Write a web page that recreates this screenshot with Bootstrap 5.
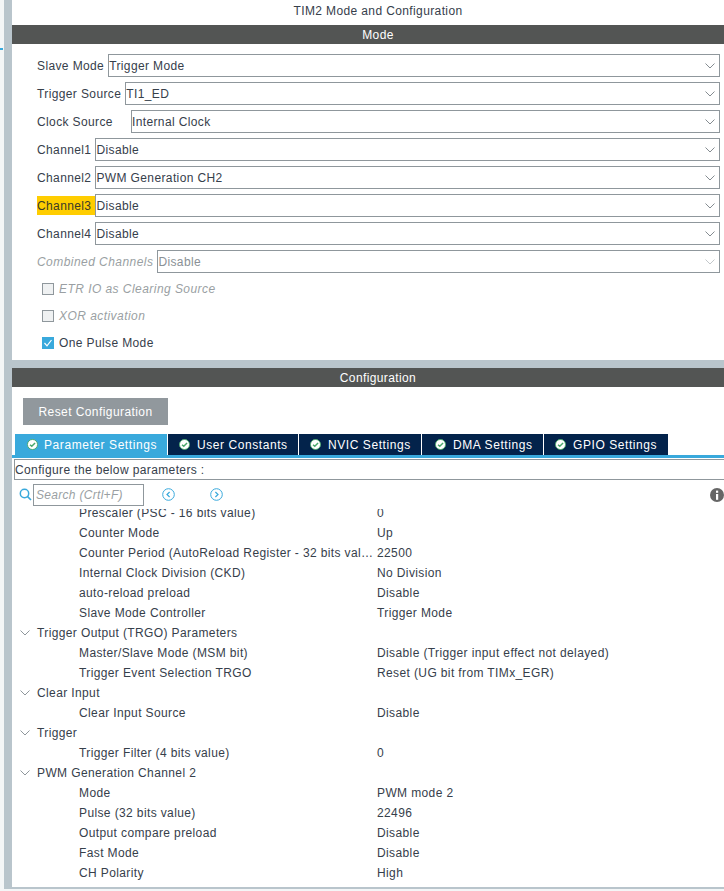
<!DOCTYPE html>
<html lang="en">
<head>
<meta charset="utf-8">
<title>TIM2 Mode and Configuration</title>
<link href="https://cdn.jsdelivr.net/npm/bootstrap@5.3.0/dist/css/bootstrap.min.css" rel="stylesheet">
<style>
html,body{height:891px;overflow:hidden}
body{font-family:"Liberation Sans",Arial,sans-serif;font-size:12px;letter-spacing:.38px;color:#36404b;background:#f4f6f7}
.shell{height:889px;padding-left:4px}
.gutter{width:8px;background:#b9c5cc;flex:none}
.edge-mark{position:absolute;left:0;top:48px;width:3px;height:2px;background:#39a9dc}
.main{flex:1;min-width:0;background:#b9c5cc}
.mode-title{height:25px;line-height:22px;background:#fff;text-align:center;padding-left:20px}
.bar{height:19px;line-height:20px;background:#535554;color:#fff;text-align:center;padding-left:20px}
.mode-pane{background:#fff;height:316px;padding:10px 4px 0 25px;margin-bottom:8px}
.f-row{height:23px;margin-bottom:5px;line-height:24px;white-space:nowrap}
.f-label{flex:none}
.f-label.mark-y{background:#ffcd00;color:#3a3a2a;height:19px;line-height:20px;align-self:center}
.f-label.wide-gap{margin-right:18px}
.f-pick.form-select{flex:1;min-width:0;height:23px;padding:1px 22px 0 0;border:1px solid #8f979c;border-radius:0;font-size:12px;letter-spacing:.38px;line-height:21px;color:#36404b;background-image:url("data:image/svg+xml,%3Csvg xmlns='http://www.w3.org/2000/svg' viewBox='0 0 10 6'%3E%3Cpath d='M.5.5 5 5 9.500.5' fill='none' stroke='%23858c91'/%3E%3C/svg%3E");background-size:10px 6px;background-position:right 4px center;box-shadow:none}
.f-pick.form-select:disabled{background-color:#fff;color:#8a9196;border-color:#8f979c;background-image:url("data:image/svg+xml,%3Csvg xmlns='http://www.w3.org/2000/svg' viewBox='0 0 10 6'%3E%3Cpath d='M.5.5 5 5 9.500.5' fill='none' stroke='%23c3c8cb'/%3E%3C/svg%3E")}
.dim{color:#9a9fa3;font-style:italic;letter-spacing:.45px}
.chks{margin-top:-3px}
.chk{height:27px;margin:0 0 0 5px;padding:0;min-height:0;gap:5px}
.chk .form-check-input{float:none;margin:0;width:12px;height:12px;border-radius:0;border:1px solid #8f979c;background-color:#eff1f2;opacity:1}
.chk .form-check-input:checked{background-color:#39a9dc;border-color:#39a9dc;background-size:12px 12px;background-image:url("data:image/svg+xml,%3Csvg xmlns='http://www.w3.org/2000/svg' viewBox='0 0 12 12'%3E%3Cpath d='M2.500 6 5 8.800 9.500 3' fill='none' stroke='%23fff' stroke-width='1.200'/%3E%3C/svg%3E")}
.conf-pane{background:#fff;height:500px;overflow:hidden}
.reset.btn{display:block;margin:11px 0 9px 11px;height:27px;width:145px;padding:0;border:0;border-radius:0;background:#91989d;color:#fff;font-size:12px;letter-spacing:.42px}
.tabbar.nav{flex-wrap:nowrap;margin:0;border-bottom:3px solid #39a9dc;padding-left:3px;height:24px}
.tabbar .nav-link{height:21px;line-height:21px;padding:0 0 0 11px;border:0;border-radius:0;background:#03234b;color:#fff;font-size:12px;letter-spacing:.57px;margin-right:1px;display:flex;align-items:center;justify-content:flex-start;gap:6px}
.tabbar .nav-link.active{background:#39a9dc;color:#fff;padding-left:12px}
.tab-text{padding-top:1px}
.t1{width:152px}.t2{width:130px}.t3{width:122px}.t4{width:121px}.t5{width:124px}
.tabbar .nav-link.t2,.tabbar .nav-link.t3,.tabbar .nav-link.t5{gap:7px}
.tabbar .nav-link.t4{padding-left:13px;gap:7px}
.ok{width:11px;height:11px;flex:none}
.cfg-line{height:21px;line-height:20px;margin:1px 0 0 2px;border:1px solid #8f979c;border-right:0;padding-left:0;white-space:nowrap}
.find-row{height:29px;padding:4px 0 0 7px;gap:1px;background:#fff;position:relative;z-index:1}
.find.form-control{width:111px;height:22px;min-height:0;padding:0 2px;border:1px solid #8f979c;border-radius:0;font-size:12px;font-style:italic;letter-spacing:.3px;box-shadow:none}
.find.form-control::placeholder{color:#9a9fa3;opacity:1}
.nav-next{margin-left:34px}
.nav-prev{margin-left:17px}
.tree{height:390px;margin-top:-6px}
.t-row{height:20px;line-height:20px;white-space:nowrap;display:flex}
.t-row.leaf{padding-left:67px}
.t-row.grp{padding-left:8px;gap:7px;align-items:center}
.t-key{width:298px;flex:none}
.t-key.cut{width:296px;margin-right:2px}
.t-row.grp svg{width:10px;height:6px;flex:none}
</style>
</head>
<body>
<span class="edge-mark"></span>
<div class="shell d-flex">
  <div class="gutter"></div>
  <div class="main">
    <div class="mode-title">TIM2 Mode and Configuration</div>
    <div class="bar">Mode</div>
    <div class="mode-pane">
      <div class="f-row d-flex gap-1"><span class="f-label">Slave Mode</span><select class="f-pick form-select"><option>Trigger Mode</option></select></div>
      <div class="f-row d-flex gap-1"><span class="f-label">Trigger Source</span><select class="f-pick form-select"><option>TI1_ED</option></select></div>
      <div class="f-row d-flex"><span class="f-label wide-gap">Clock Source</span><select class="f-pick form-select"><option>Internal Clock</option></select></div>
      <div class="f-row d-flex"><span class="f-label pe-1">Channel1</span><select class="f-pick form-select"><option>Disable</option></select></div>
      <div class="f-row d-flex"><span class="f-label pe-1">Channel2</span><select class="f-pick form-select"><option>PWM Generation CH2</option></select></div>
      <div class="f-row d-flex"><span class="f-label mark-y pe-1">Channel3</span><select class="f-pick form-select"><option>Disable</option></select></div>
      <div class="f-row d-flex"><span class="f-label pe-1">Channel4</span><select class="f-pick form-select"><option>Disable</option></select></div>
      <div class="f-row d-flex gap-1"><span class="f-label dim">Combined Channels</span><select class="f-pick form-select" disabled><option>Disable</option></select></div>
      <div class="chks">
      <div class="chk form-check d-flex align-items-center"><input class="form-check-input" type="checkbox" disabled id="c1"><label class="dim" for="c1">ETR IO as Clearing Source</label></div>
      <div class="chk form-check d-flex align-items-center"><input class="form-check-input" type="checkbox" disabled id="c2"><label class="dim" for="c2">XOR activation</label></div>
      <div class="chk form-check d-flex align-items-center"><input class="form-check-input" type="checkbox" checked id="c3"><label for="c3">One Pulse Mode</label></div>
      </div>
    </div>
    <div class="bar">Configuration</div>
    <div class="conf-pane">
      <button class="reset btn" type="button">Reset Configuration</button>
      <ul class="tabbar nav">
        <li class="nav-item"><a class="nav-link active t1" href="#"><svg class="ok" viewBox="0 0 12 12"><circle cx="6" cy="6" r="5.5" fill="#fff" stroke="#49a86b"/><path d="M3.3 6.200 5.200 8 8.800 4.300" fill="none" stroke="#49a86b" stroke-width="1.6"/></svg><span class="tab-text">Parameter Settings</span></a></li>
        <li class="nav-item"><a class="nav-link t2" href="#"><svg class="ok" viewBox="0 0 12 12"><circle cx="6" cy="6" r="5.5" fill="#fff" stroke="#49a86b"/><path d="M3.3 6.200 5.200 8 8.800 4.300" fill="none" stroke="#49a86b" stroke-width="1.6"/></svg><span class="tab-text">User Constants</span></a></li>
        <li class="nav-item"><a class="nav-link t3" href="#"><svg class="ok" viewBox="0 0 12 12"><circle cx="6" cy="6" r="5.5" fill="#fff" stroke="#49a86b"/><path d="M3.3 6.200 5.200 8 8.800 4.300" fill="none" stroke="#49a86b" stroke-width="1.6"/></svg><span class="tab-text">NVIC Settings</span></a></li>
        <li class="nav-item"><a class="nav-link t4" href="#"><svg class="ok" viewBox="0 0 12 12"><circle cx="6" cy="6" r="5.5" fill="#fff" stroke="#49a86b"/><path d="M3.3 6.200 5.200 8 8.800 4.300" fill="none" stroke="#49a86b" stroke-width="1.6"/></svg><span class="tab-text">DMA Settings</span></a></li>
        <li class="nav-item"><a class="nav-link t5" href="#"><svg class="ok" viewBox="0 0 12 12"><circle cx="6" cy="6" r="5.5" fill="#fff" stroke="#49a86b"/><path d="M3.3 6.200 5.200 8 8.800 4.300" fill="none" stroke="#49a86b" stroke-width="1.6"/></svg><span class="tab-text">GPIO Settings</span></a></li>
      </ul>
      <div class="cfg-line">Configure the below parameters :</div>
      <div class="find-row d-flex align-items-start">
        <svg width="13" height="13" viewBox="0 0 13 13" class="mt-1"><circle cx="5.500" cy="5.500" r="4.200" fill="none" stroke="#39a9dc" stroke-width="1.5"/><path d="M8.600 8.600 12 12" stroke="#39a9dc" stroke-width="1.6"/></svg>
        <input class="find form-control" type="text" placeholder="Search (Crtl+F)">
        <svg width="13" height="13" viewBox="0 0 13 13" class="mt-1 nav-prev"><circle cx="6.500" cy="6.500" r="5.800" fill="none" stroke="#39a9dc"/><path d="M7.600 4 5 6.500 7.600 9" fill="none" stroke="#39a9dc" stroke-width="1.2"/></svg>
        <svg width="13" height="13" viewBox="0 0 13 13" class="mt-1 nav-next"><circle cx="6.500" cy="6.500" r="5.800" fill="none" stroke="#39a9dc"/><path d="M5.400 4 8 6.500 5.400 9" fill="none" stroke="#39a9dc" stroke-width="1.2"/></svg>
        <svg width="14" height="14" viewBox="0 0 14 14" class="mt-1 ms-auto"><circle cx="7" cy="7" r="7" fill="#666"/><rect x="6" y="6" width="2.200" height="5.800" fill="#fff"/><rect x="6" y="2.600" width="2.200" height="2.200" fill="#fff"/></svg>
      </div>
      <div class="tree">
        <div class="t-row leaf"><span class="t-key">Prescaler (PSC - 16 bits value)</span><span>0</span></div>
        <div class="t-row leaf"><span class="t-key">Counter Mode</span><span>Up</span></div>
        <div class="t-row leaf"><span class="t-key cut text-truncate">Counter Period (AutoReload Register - 32 bits value)</span><span>22500</span></div>
        <div class="t-row leaf"><span class="t-key">Internal Clock Division (CKD)</span><span>No Division</span></div>
        <div class="t-row leaf"><span class="t-key">auto-reload preload</span><span>Disable</span></div>
        <div class="t-row leaf"><span class="t-key">Slave Mode Controller</span><span>Trigger Mode</span></div>
        <div class="t-row grp"><svg viewBox="0 0 10 6"><path d="M.5.5 5 5 9.500.5" fill="none" stroke="#8f979c"/></svg><span>Trigger Output (TRGO) Parameters</span></div>
        <div class="t-row leaf"><span class="t-key">Master/Slave Mode (MSM bit)</span><span>Disable (Trigger input effect not delayed)</span></div>
        <div class="t-row leaf"><span class="t-key">Trigger Event Selection TRGO</span><span>Reset (UG bit from TIMx_EGR)</span></div>
        <div class="t-row grp"><svg viewBox="0 0 10 6"><path d="M.5.5 5 5 9.500.5" fill="none" stroke="#8f979c"/></svg><span>Clear Input</span></div>
        <div class="t-row leaf"><span class="t-key">Clear Input Source</span><span>Disable</span></div>
        <div class="t-row grp"><svg viewBox="0 0 10 6"><path d="M.5.5 5 5 9.500.5" fill="none" stroke="#8f979c"/></svg><span>Trigger</span></div>
        <div class="t-row leaf"><span class="t-key">Trigger Filter (4 bits value)</span><span>0</span></div>
        <div class="t-row grp"><svg viewBox="0 0 10 6"><path d="M.5.5 5 5 9.500.5" fill="none" stroke="#8f979c"/></svg><span>PWM Generation Channel 2</span></div>
        <div class="t-row leaf"><span class="t-key">Mode</span><span>PWM mode 2</span></div>
        <div class="t-row leaf"><span class="t-key">Pulse (32 bits value)</span><span>22496</span></div>
        <div class="t-row leaf"><span class="t-key">Output compare preload</span><span>Disable</span></div>
        <div class="t-row leaf"><span class="t-key">Fast Mode</span><span>Disable</span></div>
        <div class="t-row leaf"><span class="t-key">CH Polarity</span><span>High</span></div>
      </div>
    </div>
  </div>
</div>
<script src="https://cdn.jsdelivr.net/npm/bootstrap@5.3.0/dist/js/bootstrap.bundle.min.js"></script>
</body>
</html>
